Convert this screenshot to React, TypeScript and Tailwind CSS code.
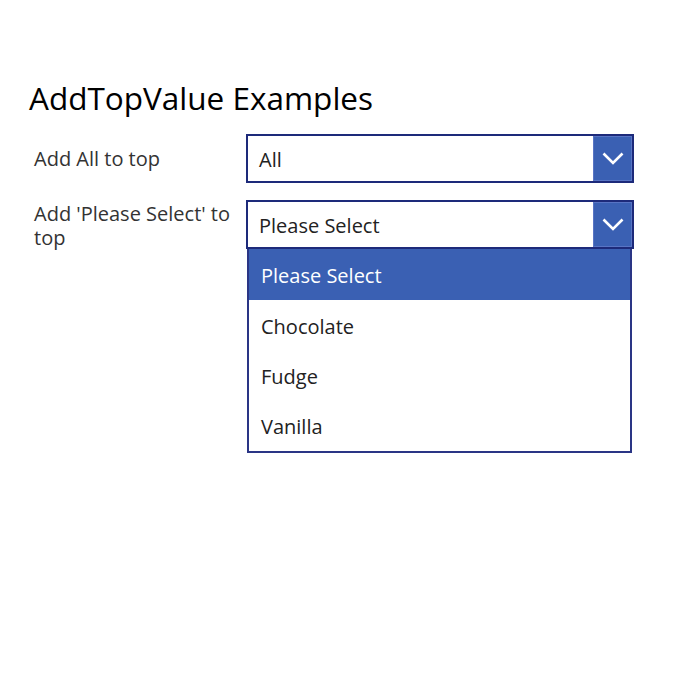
import React from "react";

function Chevron() {
  return (
    <svg width="22" height="13" viewBox="0 0 22 13" fill="none">
      <path d="M1.5 1.5 L11 11 L20.5 1.5" stroke="white" strokeWidth="2.6" />
    </svg>
  );
}

function Dropdown({ value }: { value: string }) {
  return (
    <div className="flex h-[49px] w-[388px] border-2 border-[#1d2a7a] bg-white">
      <div className="flex flex-1 items-center pl-[11px] pt-[2px] text-[20px] text-[#222]">{value}</div>
      <div className="flex w-[39px] items-center justify-center border border-[#5874c4] bg-[#3a60b3]">
        <Chevron />
      </div>
    </div>
  );
}

export default function App() {
  const items = [
    { label: "Please Select", h: "h-[51px]" },
    { label: "Chocolate", h: "h-[51px]" },
    { label: "Fudge", h: "h-[50px]" },
    { label: "Vanilla", h: "h-[50px]" },
  ];
  return (
    <div
      className="h-[693px] w-[692px] bg-white"
      style={{ fontFamily: '"Open Sans", "Noto Sans", sans-serif' }}
    >
      <div className="pl-[29px] pt-[77px]">
        <h1 className="text-[31.5px] leading-[42px] text-black">AddTopValue Examples</h1>
      </div>

      <div className="mt-[15px] flex">
        <div className="w-[246px] shrink-0 pl-[34px] pt-[13px] text-[20px] leading-[24px] text-[#333]">
          Add All to top
        </div>
        <Dropdown value="All" />
      </div>

      <div className="mt-[17px] flex">
        <div className="w-[246px] shrink-0 pl-[34px] pt-[2px] text-[20px] leading-[24px] text-[#333]">
          Add 'Please Select' to top
        </div>
        <div className="flex flex-col">
          <Dropdown value="Please Select" />
          <div className="ml-[1px] w-[385px] border-2 border-t-0 border-[#2a3585] bg-white">
            {items.map((item, i) => (
              <div
                key={item.label}
                className={`flex items-center pl-[12px] pt-[2px] text-[20px] ${item.h} ${
                  i === 0 ? "bg-[#3a60b3] text-white" : "text-[#222]"
                }`}
              >
                {item.label}
              </div>
            ))}
          </div>
        </div>
      </div>
    </div>
  );
}
